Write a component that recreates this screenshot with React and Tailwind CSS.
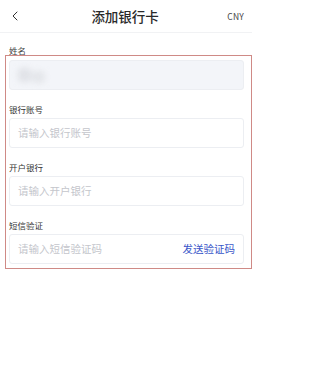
import { ChevronLeft } from "lucide-react";

const fields = [
  { label: "银行账号", placeholder: "请输入银行账号" },
  { label: "开户银行", placeholder: "请输入开户银行" },
  { label: "短信验证", placeholder: "请输入短信验证码", action: "发送验证码" },
];

export default function App() {
  return (
    <div className="w-[315px] h-[370px] bg-white font-['Noto_Sans_CJK_SC','Noto_Sans',sans-serif] text-[#222]">
      <div className="w-[252px]">
        {/* Header */}
        <div className="h-[33px] flex items-center justify-between pl-[7px] pr-[8px] border-b border-[#f1f2f4]">
          <ChevronLeft size={16} strokeWidth={1.5} className="text-[#333]" />
          <span className="text-[13.5px] font-medium text-[#2a2a2a]">添加银行卡</span>
          <span className="text-[8.5px] text-[#444] tracking-wide">CNY</span>
        </div>

        {/* Name label sits above the highlight box */}
        <div className="mt-[12px] pl-[9px] text-[8.5px] leading-[10px] text-[#444]">姓名</div>

        <div className="ml-[5px] w-[247px] border border-[#cf8a86] pt-[4px] pl-[3px] pr-[7px] pb-[4px]">
          <div className="h-[30px] rounded-[3px] bg-[#f3f5f9] border border-[#eceef2] flex items-center pl-[8px]">
            <div className="flex gap-[1px] blur-[3px] opacity-80">
              <div className="w-[13px] h-[14px] bg-[#dcdee3] rounded-sm" />
              <div className="w-[13px] h-[12px] bg-[#e0e2e6] rounded-sm mt-[3px]" />
            </div>
          </div>

          {fields.map((f) => (
            <div key={f.label}>
              <div className="mt-[14px] text-[8.5px] leading-[10px] text-[#333]">{f.label}</div>
              <div className="mt-[4px] h-[30px] rounded-[3px] bg-white border border-[#eceef2] flex items-center justify-between pl-[8px] pr-[8px]">
                <span className="text-[10.5px] text-[#c4c6cc]">{f.placeholder}</span>
                {f.action && <span className="text-[10.5px] text-[#3a56c9]">{f.action}</span>}
              </div>
            </div>
          ))}
        </div>
      </div>
    </div>
  );
}
